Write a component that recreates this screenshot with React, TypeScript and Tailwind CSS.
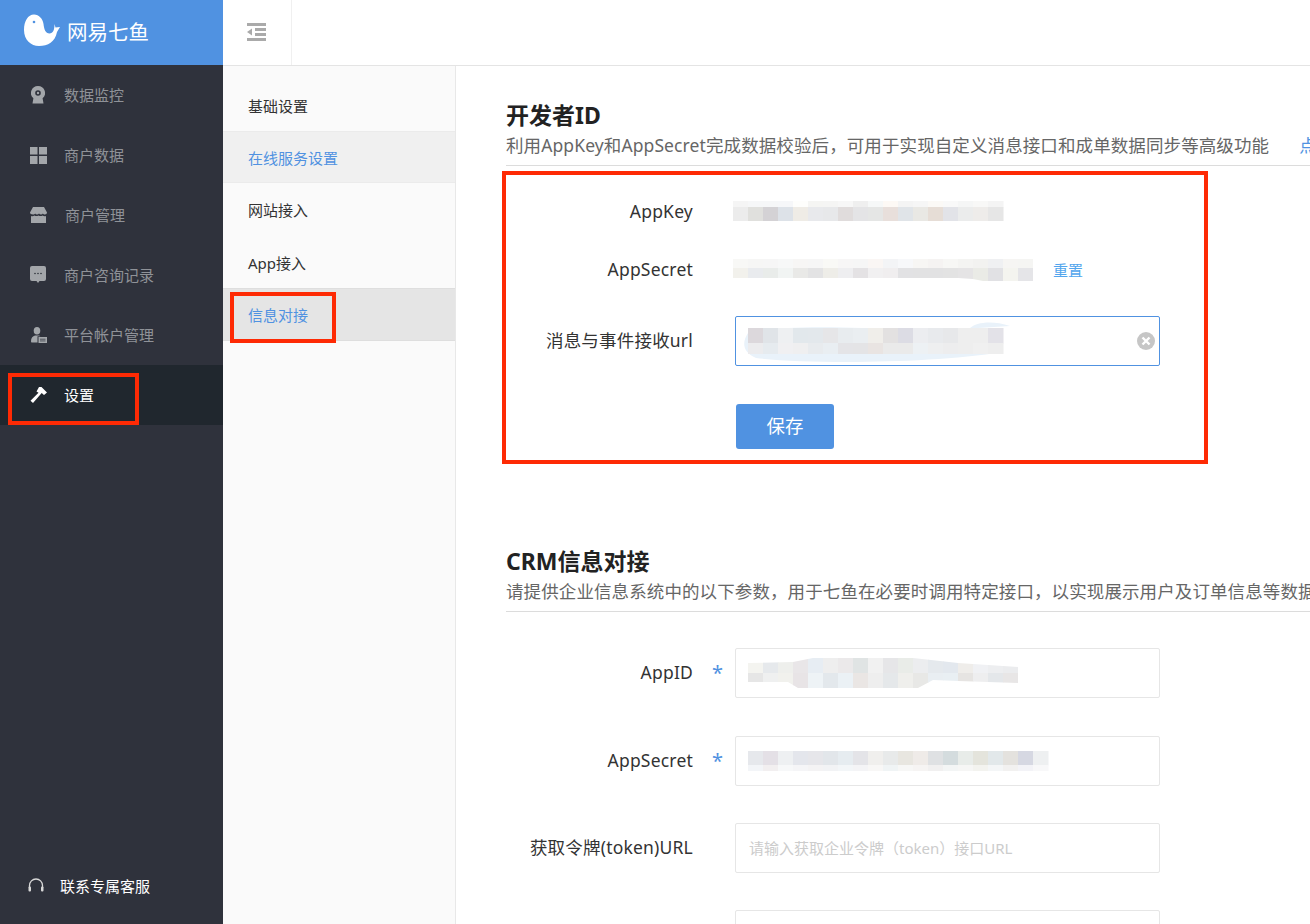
import type { ReactNode } from 'react';

const cjk = { fontFamily: '"Noto Sans", "Noto Sans CJK SC", sans-serif' };

interface MosaicProps {
  width: number;
  height: number;
  split: number;
  top: string[];
  bottom: string[];
  clip?: string;
  blob?: ReactNode;
  className?: string;
}

// blurred-out values in the screenshot, 15px wide cells in two rows
function Mosaic({ width, height, split, top, bottom, clip, blob, className = '' }: MosaicProps) {
  const id = `clip-${width}-${height}`;
  return (
    <svg width={width} height={height} viewBox={`0 0 ${width} ${height}`} className={`block shrink-0 overflow-visible ${className}`}>
      {blob}
      {clip && (
        <clipPath id={id}>
          <polygon points={clip} />
        </clipPath>
      )}
      <g clipPath={clip ? `url(#${id})` : undefined}>
        {top.map((c, i) => (
          <rect key={`t${i}`} x={i * 15} y={0} width={15.5} height={split + 0.5} fill={c} />
        ))}
        {bottom.map((c, i) => (
          <rect key={`b${i}`} x={i * 15} y={split} width={15.5} height={height - split} fill={c} />
        ))}
      </g>
    </svg>
  );
}

const MonitorIcon = () => (
  <svg width="14" height="18" viewBox="0 0 14 18" fill="#a3a6aa">
    <path fillRule="evenodd" d="M7 0a7 7 0 0 1 4.600 12.300L12.500 17.500H1.500L2.400 12.300A7 7 0 0 1 7 0Zm0 4.200a2.800 2.800 0 1 0 0 5.600a2.800 2.800 0 0 0 0-5.600Z" />
    <circle cx="7" cy="7" r="1.200" />
  </svg>
);

const GridIcon = () => (
  <svg width="17" height="17" viewBox="0 0 17 17" fill="#a3a6aa">
    <rect x="0" y="0" width="7.500" height="7.500" />
    <rect x="9" y="0" width="8" height="7.500" />
    <rect x="0" y="9" width="7.500" height="8" />
    <rect x="9" y="9" width="8" height="8" />
  </svg>
);

const StoreIcon = () => (
  <svg width="17" height="16" viewBox="0 0 17 16" fill="#a3a6aa">
    <path d="M3 0h11l3 5.500c0 1.300-1 2-2.100 2c-.8 0-1.600-.4-2-1c-.4.600-1.100 1-1.900 1s-1.500-.4-2-1c-.5.600-1.200 1-2 1s-1.500-.4-1.900-1c-.4.600-1.200 1-2 1C1 7.500 0 6.800 0 5.500Z" />
    <path d="M1 9c1.200.4 2.500.2 3.500-.5c1 .8 2.800.8 4 0c1.200.8 3 .8 4 0c1 .7 2.300.9 3.500.5v7H1Z" />
  </svg>
);

const ChatIcon = () => (
  <svg width="16" height="18" viewBox="0 0 16 18" fill="#a3a6aa">
    <path d="M2 0h12a2 2 0 0 1 2 2v11a2 2 0 0 1-2 2H9.500L8 17l-1.500-2H2a2 2 0 0 1-2-2V2a2 2 0 0 1 2-2Z" />
    <circle cx="5" cy="7.500" r=".8" fill="#2f323c" />
    <circle cx="8" cy="7.500" r=".8" fill="#2f323c" />
    <circle cx="11" cy="7.500" r=".8" fill="#2f323c" />
  </svg>
);

const UserIcon = () => (
  <svg width="16" height="16" viewBox="0 0 16 16" fill="#a3a6aa">
    <ellipse cx="6" cy="3.800" rx="3.300" ry="3.800" />
    <path d="M0 14c0-3 1.800-5 4-5.500h4c.5.200 1 .4 1.300.7H6.500v6.300H1c-.6 0-1-.5-1-1.500Z" />
    <rect x="7.500" y="10" width="8.500" height="6" />
    <rect x="9" y="11.800" width="5.500" height=".7" fill="#2f323c" />
    <rect x="9" y="13.600" width="5.500" height=".7" fill="#2f323c" />
  </svg>
);

const HammerIcon = () => (
  <svg width="17" height="16" viewBox="0 0 17 16" fill="#ffffff">
    <path d="M6.500 4.500L9 0h2.500L17 5.500l-3 2.500l-2.300-2L3 16L0.500 13.800L8.500 5.800Z" />
  </svg>
);

const HeadsetIcon = () => (
  <svg width="16" height="15" viewBox="0 0 16 15" fill="none">
    <path d="M1.500 10V7.500a6.500 6.500 0 0 1 13 0V10" stroke="#d8d8d8" strokeWidth="1.300" />
    <rect x="0.500" y="8.500" width="2.500" height="5" rx="1" fill="#d8d8d8" />
    <rect x="13" y="8.500" width="2.500" height="5" rx="1" fill="#d8d8d8" />
  </svg>
);

const navItems = [
  { icon: <MonitorIcon />, label: '数据监控', iconBox: 'w-[14px] ml-[31px]', gap: 'ml-[19px]' },
  { icon: <GridIcon />, label: '商户数据', iconBox: 'w-[17px] ml-[30px]', gap: 'ml-[17px]' },
  { icon: <StoreIcon />, label: '商户管理', iconBox: 'w-[17px] ml-[30px]', gap: 'ml-[18px]' },
  { icon: <ChatIcon />, label: '商户咨询记录', iconBox: 'w-[16px] ml-[30px]', gap: 'ml-[18px]' },
  { icon: <UserIcon />, label: '平台帐户管理', iconBox: 'w-[16px] ml-[31px]', gap: 'ml-[17px]' },
  { icon: <HammerIcon />, label: '设置', iconBox: 'w-[17px] ml-[30px]', gap: 'ml-[17px]', active: true },
];

const subItems = [
  { label: '基础设置', className: 'h-[51px] mt-[14px] text-[#333]' },
  { label: '在线服务设置', className: 'h-[52px] bg-[#f0f0f0] border-y border-[#ebebeb] text-[#5092e1]' },
  { label: '网站接入', className: 'h-[53px] text-[#333]' },
  { label: 'App接入', className: 'h-[52px] text-[#333]' },
  { label: '信息对接', className: 'h-[53px] bg-[#e5e5e5] border-y border-[#dedede] text-[#5092e1]' },
];

function FormRow({ label, required, className, children }: { label: string; required?: boolean; className: string; children: ReactNode }) {
  return (
    <div className={`flex items-center ${className}`}>
      <div className="mb-[1px] w-[187px] shrink-0 text-right text-[17.5px] leading-none tracking-[0.2px] text-[#333] whitespace-nowrap">{label}</div>
      <div className="mb-[1px] w-[42px] shrink-0 pl-[7px] text-center text-[20px] leading-none text-[#5092e1]">{required ? '*' : ''}</div>
      {children}
    </div>
  );
}

function InputBox({ className, children }: { className: string; children: ReactNode }) {
  return <div className={`relative flex items-center w-[425px] h-[50px] rounded-[2px] border bg-white ${className}`}>{children}</div>;
}

function SectionHead({ title, desc, extra }: { title: string; desc: string; extra?: string }) {
  return (
    <div className="border-b border-[#dcdcdc] pb-[5px]">
      <h2 className="text-[23px] leading-[30px] font-bold text-[#222]">{title}</h2>
      <p className="text-[17.5px] leading-[30px] tracking-[0.1px] text-[#666] whitespace-nowrap">
        {desc}
        {extra && <span className="ml-[30px] text-[#5092e1]">{extra}</span>}
      </p>
    </div>
  );
}

export default function App() {
  return (
    <div className="relative flex h-[924px] w-full overflow-hidden bg-white" style={cjk}>
      <aside className="flex w-[223px] shrink-0 flex-col bg-[#2f323c]">
        <div className="flex h-[65px] items-center bg-[#5092e1] pl-[24px]">
          <svg width="36" height="32" viewBox="24 14 36 32" className="-mt-[5px]">
            <path fill="#fff" d="M34 14.500C28 14.500 24 21 24 30C24 40 31 46 39 46C48 46 55 42 57 32L60 27L55.500 27.500L54.500 24C54.500 30 53 33.500 49.500 33.500C45.500 33.500 44 29 43.500 24C43 19 39 14.500 34 14.500Z" />
            <circle cx="34" cy="22" r="1.300" fill="#5092e1" />
          </svg>
          <span className="ml-[7px] -mt-[1px] text-[20.500px] leading-none font-normal text-white whitespace-nowrap">网易七鱼</span>
        </div>
        {navItems.map((item) => (
          <div key={item.label} className={`flex h-[60px] items-center text-[15px] ${item.active ? 'bg-[#20272e] text-white' : 'text-[#8f9298]'}`}>
            <div className={`flex shrink-0 justify-center ${item.iconBox}`}>{item.icon}</div>
            <span className={item.gap}>{item.label}</span>
          </div>
        ))}
        <div className="mt-auto mb-[27px] flex items-center pl-[28px] text-[15px] text-white">
          <HeadsetIcon />
          <span className="ml-[16px]">联系专属客服</span>
        </div>
      </aside>

      <div className="flex min-w-0 flex-1 flex-col">
        <header className="flex h-[66px] shrink-0 border-b border-[#e4e4e4]">
          <div className="flex w-[69px] items-center justify-center border-r border-[#f0f0f0] pr-[2px]">
            <svg width="19" height="19" viewBox="0 0 19 19" fill="#aaaaaa">
              <rect x="0" y="0" width="19" height="3" />
              <rect x="8" y="5" width="11" height="3" />
              <rect x="8" y="10" width="11" height="3" />
              <rect x="0" y="15" width="19" height="3" />
              <polygon points="0,9 5,5.500 5,12.500" />
            </svg>
          </div>
        </header>

        <div className="flex min-h-0 flex-1">
          <nav className="w-[233px] shrink-0 border-r border-[#e8e8e8] bg-[#fafafa] text-[15px]">
            {subItems.map((item) => (
              <div key={item.label} className={`flex items-center pl-[25px] pt-[2px] ${item.className}`}>
                {item.label}
              </div>
            ))}
          </nav>

          <main className="min-w-0 flex-1 overflow-hidden pl-[50px] pt-[34px]">
            <SectionHead
              title="开发者ID"
              desc="利用AppKey和AppSecret完成数据校验后，可用于实现自定义消息接口和成单数据同步等高级功能"
              extra="点此查看接入文档"
            />

            <FormRow label="AppKey" className="mt-[21px] h-[50px]">
              <Mosaic
                className="-ml-[2px] mb-[2px]"
                width={270}
                height={20}
                split={6}
                top={['#f5f5f5', '#f6f7f8', '#f6f7f8', '#f6f7f9', '#fefefc', '#f5f5f3', '#f5f5f4', '#f7f7f7', '#efefef', '#f6f8f8', '#fdf9f5', '#f4f4f4', '#f6f6f6', '#fbf9f6', '#f9f9f9', '#f5f6f6', '#f8f8f7', '#f4f4f4']}
                bottom={['#ececec', '#e0e0dd', '#d4d2d5', '#dde2e8', '#efece6', '#e8e9ec', '#e7e8ea', '#e0dcdc', '#e4e4e6', '#e5e6e5', '#e8dfdb', '#e0e4e8', '#e9e8e4', '#e6ddd6', '#e2e3e8', '#ebecec', '#eeecea', '#e6e6e6']}
              />
            </FormRow>
            <FormRow label="AppSecret" className="mt-[8px] h-[50px]">
              <div className="-ml-[2px] flex items-center">
                <Mosaic
                  width={300}
                  height={22}
                  split={9}
                  clip="0,0 225,0 255,-4 280,-5 300,-3 300,22 250,22 240,20 225,19 0,19"
                  top={['#f8f8f6', '#f6f6f5', '#f6f6f6', '#f7f8f8', '#f7f6f5', '#f6f6f6', '#f9f9f6', '#f7f6f6', '#f6f6f6', '#faf6f4', '#f3f4f6', '#f7f8fa', '#f7f6f4', '#f5f3f2', '#f7f7f5', '#f4f4f2', '#f2f2f0', '#eff0f2', '#f6f5f3', '#f5f5f3']}
                  bottom={['#f2f1ec', '#e9ebee', '#e9ecea', '#f1f4f3', '#e9e9e7', '#e3e3e4', '#eeede8', '#eeeef0', '#e4e2e4', '#f1f0f1', '#f0eeef', '#e2e2e4', '#e2e2e3', '#e2e2e3', '#e3e3e3', '#e5e4e5', '#eaebe6', '#e1e1e4', '#f4f4ef', '#e5e5e8']}
                />
                <a className="ml-[20px] text-[15px] leading-none text-[#52a5ed] whitespace-nowrap">重置</a>
              </div>
            </FormRow>
            <FormRow label="消息与事件接收url" className="mt-[21px]">
              <InputBox className="border-[#5092e1] pl-[12px]">
                <Mosaic
                  width={255}
                  height={26}
                  split={15}
                  blob={<path fill="#e9f2fa" d="M0 5C10 0 60 -2 115 0L222 0C228 -6 245 -8 262 -2L230 0L255 24C180 36 60 36 8 30C-6 24 -6 14 0 5Z" />}
                  top={['#dcd8dc', '#e0e4e8', '#eef0f2', '#e2e8ec', '#e3e8ec', '#e6e6e8', '#e8ecef', '#eaeef1', '#f0eeea', '#e3e1e1', '#dcdce4', '#ecedf0', '#e8eaed', '#e7e8ea', '#eeeeee', '#eeeeee', '#e3e2e8']}
                  bottom={['#ececee', '#e6ebef', '#f0f0f2', '#efeff0', '#e8ebee', '#e9eef2', '#e4e4e7', '#e4e4e6', '#e9e4e2', '#eaeaea', '#eaeaea', '#edf1f4', '#eeeff0', '#ededee', '#eeeeee', '#f0f0f0', '#eeeeee']}
                />
                <svg width="18" height="18" viewBox="0 0 18 18" className="absolute right-[4px] top-[15px]">
                  <circle cx="9" cy="9" r="9" fill="#c6c6c6" />
                  <path d="M5.500 5.500l7 7M12.500 5.500l-7 7" stroke="#fff" strokeWidth="2.400" />
                </svg>
              </InputBox>
            </FormRow>
            <div className="mt-[38px] ml-[230px]">
              <button className="h-[45px] w-[98px] rounded-[3px] bg-[#5092e1] pb-[2px] text-[18.500px] text-white">保存</button>
            </div>

            <div className="mt-[97px]">
              <SectionHead
                title="CRM信息对接"
                desc="请提供企业信息系统中的以下参数，用于七鱼在必要时调用特定接口，以实现展示用户及订单信息等数据的功能"
              />
            </div>

            <FormRow label="AppID" required className="mt-[36px]">
              <InputBox className="border-[#e6e6e6] pl-[12px]">
                <Mosaic
                  width={270}
                  height={30}
                  split={15}
                  clip="0,5 45,4 65,0 165,0 210,5 270,9 270,25 210,23 185,22 170,30 50,30 40,24 0,24"
                  top={['#f4f4f0', '#e6e9ec', '#eeefec', '#e9e6e8', '#e7edf3', '#eeeeee', '#ebe9ea', '#e0e4e4', '#f1f1f1', '#e6e6e8', '#e9ece8', '#ecedef', '#e5e9ed', '#e3e8ee', '#efedea', '#f0f1f4', '#edeef0', '#ebecee']}
                  bottom={['#e6e6e6', '#eff0f0', '#f1f1ed', '#e8e4e6', '#eef3f6', '#e3e8ec', '#ebf1f5', '#eae6e4', '#eeeeee', '#e5e8ea', '#efefec', '#e8e8e6', '#e9eef2', '#e9eff3', '#e6e4e2', '#eeeeef', '#e4e7ea', '#e8e6e6']}
                />
              </InputBox>
            </FormRow>
            <FormRow label="AppSecret" required className="mt-[38px]">
              <InputBox className="border-[#e6e6e6] pl-[12px]">
                <Mosaic
                  width={300}
                  height={20}
                  split={14}
                  top={['#e6e8ec', '#e4e0e6', '#eef0f2', '#e4e6ec', '#e6e6ea', '#e2e6ea', '#e6ecf0', '#e4e4e8', '#f0efed', '#e8eaea', '#e8e6e0', '#efebe8', '#dfe1e3', '#d4dcde', '#e8ece9', '#e4e4dc', '#e2e8ea', '#e4e2de', '#d6d8e2', '#eef0f1']}
                  bottom={['#f3f5f8', '#f2eff0', '#f7f8f9', '#f5f5f7', '#f4f3f4', '#f2f3f5', '#f3f6f8', '#f4f4f6', '#f8f7f6', '#f0f4f5', '#f7f7f6', '#f6f4f3', '#f1f0f0', '#f3f5f5', '#f6f6f5', '#f3f3ef', '#f4f6f7', '#f2f1f0', '#f3f3f7', '#f8f8f9']}
                />
              </InputBox>
            </FormRow>
            <FormRow label="获取令牌(token)URL" className="mt-[37px]">
              <InputBox className="border-[#e6e6e6] pl-[13px]">
                <span className="text-[15px] text-[#ccc] whitespace-nowrap">请输入获取企业令牌（token）接口URL</span>
              </InputBox>
            </FormRow>
            <FormRow label="" className="mt-[37px]">
              <InputBox className="border-[#e6e6e6]">{null}</InputBox>
            </FormRow>
          </main>
        </div>
      </div>

      {/* red annotation boxes drawn on top of the screenshot */}
      <div className="absolute left-[8px] top-[373px] h-[52px] w-[131px] border-[4px] border-[#fe2a04]" />
      <div className="absolute left-[230px] top-[292px] h-[51px] w-[106px] border-[4px] border-[#fe2a04]" />
      <div className="absolute left-[502px] top-[171px] h-[293px] w-[706px] border-[4px] border-[#fe2a04]" />
    </div>
  );
}
